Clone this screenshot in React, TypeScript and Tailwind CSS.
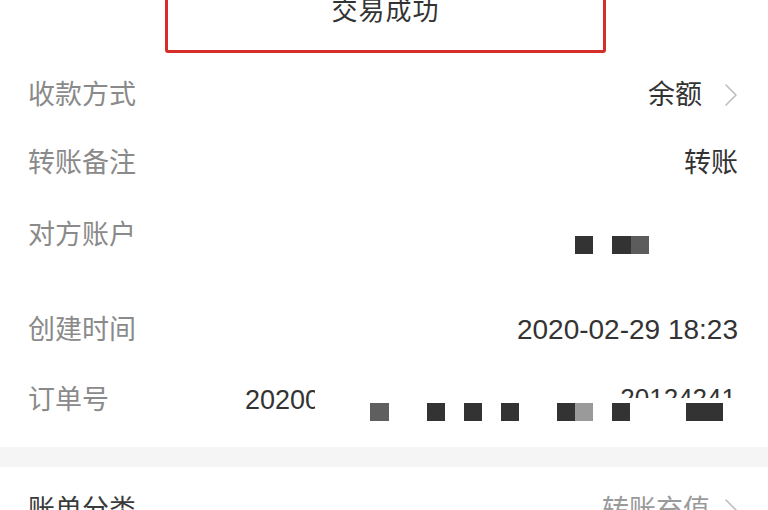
import React from 'react';

const font = "font-['Liberation_Sans','Noto_Sans_CJK_SC',sans-serif]";

function Chevron({ color = '#bdbdbd' }: { color?: string }) {
  return (
    <svg width="14" height="24" viewBox="0 0 14 24" fill="none">
      <polyline points="2,2 12,12 2,22" stroke={color} strokeWidth="1.6" strokeLinecap="round" strokeLinejoin="round" />
    </svg>
  );
}

function Block({ c = '#333333', w = 'w-[18px]' }: { c?: string; w?: string }) {
  return <div className={`h-[18px] ${w}`} style={{ backgroundColor: c }} />;
}

export default function App() {
  return (
    <div className={`w-full h-[510px] overflow-hidden bg-white ${font}`}>
      {/* Status box */}
      <div className="-mt-[30px] ml-[165px] w-[441px] h-[83px] border-[3.5px] border-[#d52d27] rounded-[3px] flex items-center justify-center">
        <span className="-mt-[1px] text-[26px] text-[#333333] tracking-[1px]">交易成功</span>
      </div>

      {/* Detail rows */}
      <div className="mt-[9px] h-[66px] flex items-center justify-between pl-[28px] pr-[30px]">
        <span className="text-[27px] text-[#8a8a8a]">收款方式</span>
        <div className="flex items-center gap-[22px]">
          <span className="text-[27px] text-[#333333]">余额</span>
          <Chevron />
        </div>
      </div>

      <div className="h-[70px] flex items-center justify-between pl-[28px] pr-[30px]">
        <span className="text-[27px] text-[#8a8a8a]">转账备注</span>
        <span className="text-[27px] text-[#333333]">转账</span>
      </div>

      <div className="h-[98px] flex items-start justify-between pl-[28px] pr-[30px]">
        <span className="mt-[17px] text-[27px] text-[#8a8a8a]">对方账户</span>
        <div className="mt-[38px] mr-[89px] flex">
          <Block />
          <div className="w-[19px]" />
          <Block w="w-[19px]" />
          <Block c="#5c5c5c" w="w-[18px]" />
        </div>
      </div>

      <div className="h-[68px] flex items-center justify-between pl-[28px] pr-[30px]">
        <span className="text-[27px] text-[#8a8a8a]">创建时间</span>
        <span className="text-[28px] text-[#333333]">2020-02-29 18:23</span>
      </div>

      <div className="relative h-[72px] flex items-center pl-[28px]">
        <span className="w-[217px] text-[27px] text-[#8a8a8a]">订单号</span>
        <span className="w-[70px] overflow-hidden whitespace-nowrap text-[27px] text-[#333333]">20200</span>
        <div className="mt-[24px] ml-[55px] flex">
          <Block c="#5f5f5f" w="w-[19px]" />
          <div className="w-[38px]" />
          <Block />
          <div className="w-[19px]" />
          <Block />
          <div className="w-[19px]" />
          <Block />
          <div className="w-[38px]" />
          <Block />
          <Block c="#9a9a9a" />
          <div className="w-[19px]" />
          <Block />
          <div className="w-[56px]" />
          <Block w="w-[37px]" />
        </div>
        <div className="absolute right-[32px] top-[25px] h-[9px] overflow-hidden">
          <div className="-mt-[4px] text-[26px] leading-none text-[#333333]">20124241</div>
        </div>
      </div>

      <div className="mt-[11px] h-[20px] bg-[#f5f5f5]" />

      <div className="h-[86px] flex items-center justify-between pl-[28px] pr-[30px]">
        <span className="text-[27px] text-[#3a3a3a]">账单分类</span>
        <div className="flex items-center gap-[14px]">
          <span className="text-[27px] text-[#9a9a9a]">转账充值</span>
          <Chevron />
        </div>
      </div>
    </div>
  );
}
